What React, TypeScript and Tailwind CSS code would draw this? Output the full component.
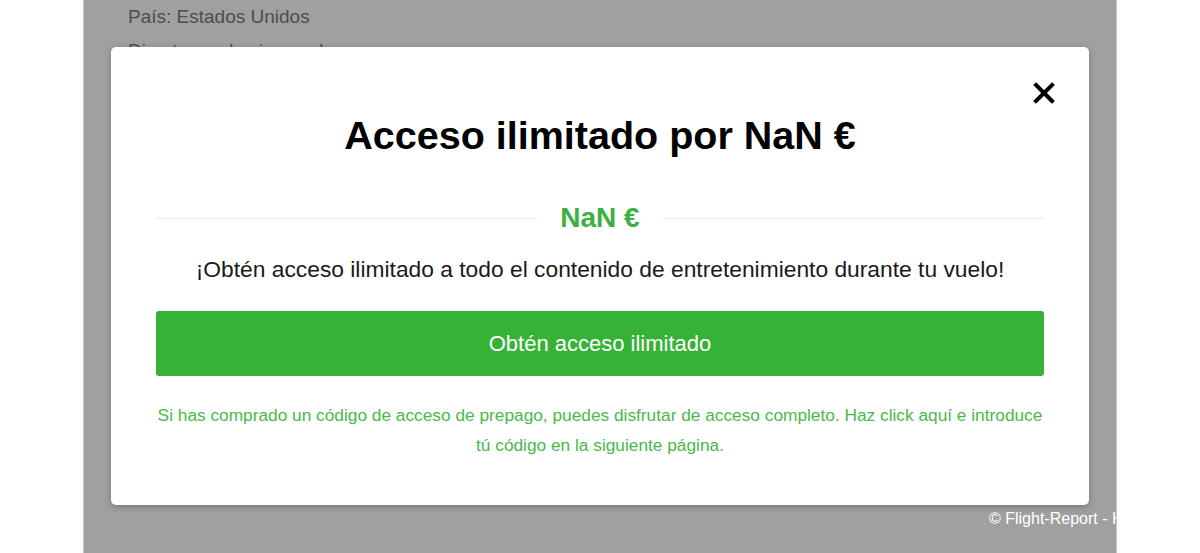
export default function App() {
  return (
    <div className="min-h-screen bg-white font-['Liberation_Sans',Arial,sans-serif]">
      <div className="relative mx-auto h-[553px] w-[1034px] overflow-hidden border-x border-[#c6c6c6] bg-[#a0a0a0]">
        {/* page content behind the overlay */}
        <div className="pl-[44px] text-[19px] leading-[34px] text-[#4d4d4d]">
          <p>País: Estados Unidos</p>
          <p>Directo: vuelo sin escalas</p>
        </div>
        <p className="absolute left-[905px] top-[507px] whitespace-nowrap text-[16px] leading-[24px] text-white">
          © Flight-Report - Kontakt
        </p>

        {/* modal */}
        <div className="absolute left-[27px] top-[47px] w-[978px] rounded-[5px] bg-white px-[45px] pb-[45px] pt-[64px] shadow-[0_2px_6px_rgba(0,0,0,0.25)]">
          <button className="absolute right-[34px] top-[35px] h-[22px] w-[22px]" aria-label="Cerrar">
            <svg viewBox="0 0 22 22" className="h-[22px] w-[22px]">
              <path d="M3 3L19 19M19 3L3 19" stroke="#000" strokeWidth="4" strokeLinecap="square" />
            </svg>
          </button>

          <h2 className="text-center text-[39.5px] font-bold leading-[48px] text-black">Acceso ilimitado por NaN €</h2>

          <div className="mt-[43px] flex items-center gap-[22px]">
            <div className="h-px flex-1 bg-[#eeeeee]" />
            <span className="text-[28px] font-bold leading-[32px] text-[#3cb043]">NaN €</span>
            <div className="h-px flex-1 bg-[#eeeeee]" />
          </div>

          <p className="mt-[20px] text-center text-[22.8px] leading-[30px] text-[#1a1a1a]">
            ¡Obtén acceso ilimitado a todo el contenido de entretenimiento durante tu vuelo!
          </p>

          <button className="mt-[27px] flex h-[65px] w-full items-center justify-center rounded-[3px] bg-[#36b336] text-[22px] text-white">
            Obtén acceso ilimitado
          </button>

          <p className="mt-[24px] text-center text-[17.3px] leading-[30px] text-[#4cb84c]">
            Si has comprado un código de acceso de prepago, puedes disfrutar de acceso completo. Haz click aquí e introduce tú código en la siguiente página.
          </p>
        </div>
      </div>
    </div>
  );
}
